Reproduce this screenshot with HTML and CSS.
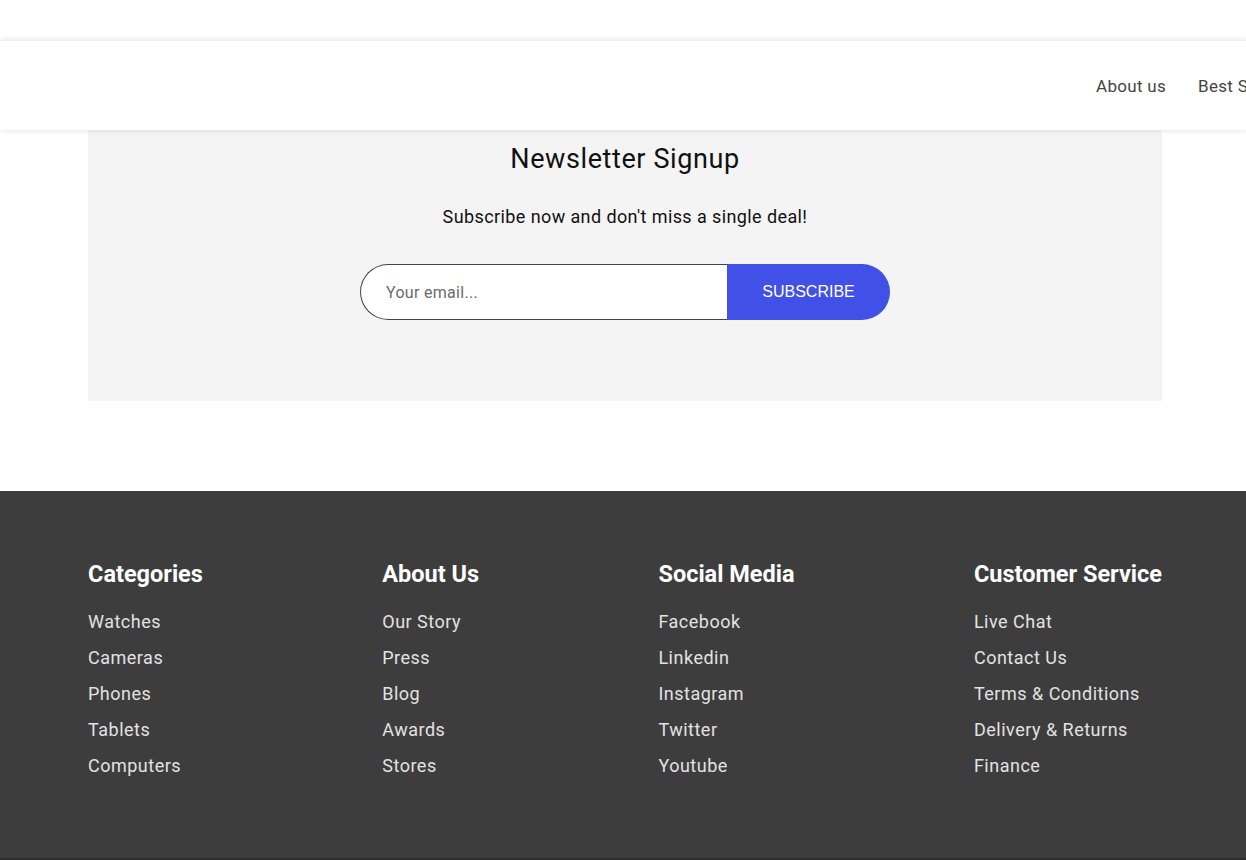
FILE: index.html
```html
<!DOCTYPE html>
<html lang="en">
<head>
<meta charset="utf-8">
<title>Newsletter</title>
<link rel="stylesheet" href="styles.css">
</head>
<body>
<div class="page">
  <div class="topbar"></div>
  <header class="header">
    <nav class="nav">
      <a href="#">About us</a>
      <a href="#">Best Sellers</a>
      <a href="#">Contact</a>
    </nav>
  </header>
  <main>
    <section class="newsletter">
      <h2 class="nl-title">Newsletter Signup</h2>
      <p class="nl-text">Subscribe now and don't miss a single deal!</p>
      <form class="nl-form">
        <input class="nl-input" type="email" placeholder="Your email...">
        <button class="nl-btn" type="button">SUBSCRIBE</button>
      </form>
    </section>
  </main>
  <footer class="footer">
    <div class="footer-cols">
      <div class="col">
        <h3>Categories</h3>
        <ul><li>Watches</li><li>Cameras</li><li>Phones</li><li>Tablets</li><li>Computers</li></ul>
      </div>
      <div class="col">
        <h3>About Us</h3>
        <ul><li>Our Story</li><li>Press</li><li>Blog</li><li>Awards</li><li>Stores</li></ul>
      </div>
      <div class="col">
        <h3>Social Media</h3>
        <ul><li>Facebook</li><li>Linkedin</li><li>Instagram</li><li>Twitter</li><li>Youtube</li></ul>
      </div>
      <div class="col">
        <h3>Customer Service</h3>
        <ul><li>Live Chat</li><li>Contact Us</li><li>Terms &amp; Conditions</li><li>Delivery &amp; Returns</li><li>Finance</li></ul>
      </div>
    </div>
  </footer>
  <div class="bottombar"></div>
</div>
</body>
</html>
```

FILE: styles.css
```css
html, body {
  margin: 0;
  padding: 0;
  overflow-x: hidden;
  background: #ffffff;
  font-family: Roboto, "Liberation Sans", Arial, sans-serif;
}
.page {
  width: 1246px;
  overflow: hidden;
}
.topbar {
  height: 40px;
  background: #ffffff;
}
.header {
  position: relative;
  z-index: 2;
  height: 90px;
  background: #ffffff;
  box-shadow: 0 0 6px rgba(0, 0, 0, 0.13);
  display: flex;
  align-items: center;
  border-top: 1px solid #f0f0f0;
  box-sizing: border-box;
}
.nav {
  display: flex;
  gap: 32px;
  padding-left: 1096px;
  white-space: nowrap;
  overflow: hidden;
}
.nav a {
  color: #444444;
  text-decoration: none;
  font-size: 17px;
  letter-spacing: 0.3px;
}
main {
  padding: 0 84px 90px 88px;
}
.newsletter {
  background: #f4f4f4;
  padding: 13px 0 81px;
  display: flex;
  flex-direction: column;
  align-items: center;
}
.nl-title {
  margin: 0;
  font-size: 27px;
  font-weight: 400;
  line-height: 32px;
  color: #111111;
  letter-spacing: 0.6px;
}
.nl-text {
  margin: 30px 0 0;
  font-size: 18px;
  line-height: 24px;
  color: #111111;
  letter-spacing: 0.4px;
}
.nl-form {
  margin-top: 35px;
  display: flex;
  height: 56px;
}
.nl-input {
  width: 367px;
  height: 56px;
  box-sizing: border-box;
  border: 1px solid #444444;
  border-right: none;
  border-radius: 28px 0 0 28px;
  padding: 0 0 0 25px;
  font-family: inherit;
  font-size: 16px;
  letter-spacing: 0.3px;
  color: #333;
  background: #ffffff;
  outline: none;
}
.nl-input::placeholder {
  color: #6b6b6b;
}
.nl-btn {
  width: 163px;
  height: 56px;
  border: none;
  border-radius: 0 28px 28px 0;
  background: #4150e6;
  color: #ffffff;
  font-family: "Liberation Sans", Arial, sans-serif;
  font-size: 16px;
  padding: 0;
}
.footer {
  background: #3d3d3d;
  height: 367px;
  box-sizing: border-box;
  padding: 68px 84px 0 88px;
}
.footer-cols {
  display: flex;
  justify-content: space-between;
}
.col h3 {
  margin: 0;
  font-size: 23.5px;
  font-weight: 700;
  line-height: 30px;
  color: #ffffff;
}
.col ul {
  list-style: none;
  margin: 15px 0 0;
  padding: 0;
}
.col li {
  font-size: 18px;
  line-height: 36px;
  color: #e2e2e2;
  letter-spacing: 0.5px;
}
.bottombar {
  height: 2px;
  background: #2c2c2c;
}
```
